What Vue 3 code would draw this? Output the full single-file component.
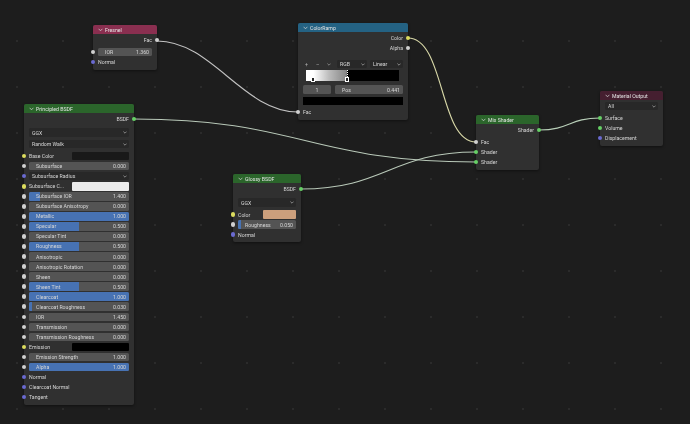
<template>
  <div class="canvas">
    <svg class="wires" width="690" height="424" viewBox="0 0 690 424" fill="none">
      <path v-for="w in wires" :key="w.d" :d="w.d" :stroke="w.color" stroke-width="1.1" />
    </svg>

    <div v-for="node in nodes" :key="node.title" class="node" :class="node.cls">
      <div class="head">
        <svg class="chev" width="5" height="4" viewBox="0 0 5 4" fill="none"><path d="M.6.8 2.5 2.8 4.4.8" stroke="#d8d8d8" stroke-width=".7" /></svg>
        <span>{{ node.title }}</span>
      </div>
      <div class="body">
        <div v-for="(r, i) in node.rows" :key="i" class="row" :class="['r-' + r.type, { linked: r.socket }]">
          <i v-if="r.socket" class="sock" :class="[r.side || 'left', r.socket]"></i>

          <span v-if="r.type === 'out' || r.type === 'in'" class="lbl">{{ r.label }}</span>

          <div v-else-if="r.type === 'select'" class="select">
            <span>{{ r.label }}</span>
            <svg width="4" height="3" viewBox="0 0 4 3" fill="none"><path d="M.4.6 2 2.2 3.6.6" stroke="#c8c8c8" stroke-width=".6" /></svg>
          </div>

          <div v-else-if="r.type === 'slider'" class="slider">
            <div class="fill" :style="{ width: r.fill * 100 + '%' }"></div>
            <span class="name">{{ r.label }}</span>
            <span class="val">{{ r.value }}</span>
          </div>

          <template v-else-if="r.type === 'color'">
            <span class="lbl">{{ r.label }}</span>
            <div class="swatch" :class="r.swatch" :style="{ background: r.color }"></div>
          </template>

          <template v-else-if="r.type === 'tools'">
            <div class="ramp-tools">
              <span>+</span><span>–</span>
              <svg width="4" height="3" viewBox="0 0 4 3" fill="none"><path d="M.4.6 2 2.2 3.6.6" stroke="#b4b4b4" stroke-width=".6" /></svg>
            </div>
            <div class="select rgb"><span>RGB</span><svg width="4" height="3" viewBox="0 0 4 3" fill="none"><path d="M.4.6 2 2.2 3.6.6" stroke="#c8c8c8" stroke-width=".6" /></svg></div>
            <div class="select linear"><span>Linear</span><svg width="4" height="3" viewBox="0 0 4 3" fill="none"><path d="M.4.6 2 2.2 3.6.6" stroke="#c8c8c8" stroke-width=".6" /></svg></div>
          </template>

          <div v-else-if="r.type === 'band'" class="band">
            <div class="handle first"></div>
            <div class="marker"></div>
            <div class="handle second"></div>
          </div>

          <template v-else-if="r.type === 'stop'">
            <div class="slider idx"><span class="name">1</span></div>
            <div class="slider pos"><span class="name">Pos</span><span class="val">0.441</span></div>
          </template>

          <div v-else-if="r.type === 'black'" class="blackbar"></div>
        </div>
      </div>
    </div>
  </div>
</template>

<script setup>
const slider = (label, value, fill = 0, socket = 'grey') => ({ type: 'slider', label, value, fill, socket })
const input = (label, socket) => ({ type: 'in', label, socket })
const output = (label, socket) => ({ type: 'out', label, socket, side: 'right' })

const nodes = [
  {
    title: 'Fresnel',
    cls: 'n-fresnel',
    rows: [
      output('Fac', 'grey'),
      slider('IOR', '1.360'),
      input('Normal', 'blue')
    ]
  },
  {
    title: 'ColorRamp',
    cls: 'n-ramp',
    rows: [
      output('Color', 'yellow'),
      output('Alpha', 'grey'),
      { type: 'tools' },
      { type: 'band' },
      { type: 'stop' },
      { type: 'black' },
      input('Fac', 'grey')
    ]
  },
  {
    title: 'Principled BSDF',
    cls: 'n-principled',
    rows: [
      output('BSDF', 'green'),
      { type: 'select', label: 'GGX' },
      { type: 'select', label: 'Random Walk' },
      { type: 'color', label: 'Base Color', color: '#191919', socket: 'yellow' },
      slider('Subsurface', '0.000'),
      { type: 'select', label: 'Subsurface Radius', socket: 'blue' },
      { type: 'color', label: 'Subsurface C...', color: '#ededed', socket: 'yellow' },
      slider('Subsurface IOR', '1.400', 0.11),
      slider('Subsurface Anisotropy', '0.000'),
      slider('Metallic', '1.000', 1),
      slider('Specular', '0.500', 0.5),
      slider('Specular Tint', '0.000'),
      slider('Roughness', '0.500', 0.5),
      slider('Anisotropic', '0.000'),
      slider('Anisotropic Rotation', '0.000'),
      slider('Sheen', '0.000'),
      slider('Sheen Tint', '0.500', 0.5),
      slider('Clearcoat', '1.000', 1),
      slider('Clearcoat Roughness', '0.030', 0.03),
      slider('IOR', '1.450'),
      slider('Transmission', '0.000'),
      slider('Transmission Roughness', '0.000'),
      { type: 'color', label: 'Emission', color: '#000', socket: 'yellow' },
      slider('Emission Strength', '1.000'),
      slider('Alpha', '1.000', 1),
      input('Normal', 'blue'),
      input('Clearcoat Normal', 'blue'),
      input('Tangent', 'blue')
    ]
  },
  {
    title: 'Glossy BSDF',
    cls: 'n-glossy',
    rows: [
      output('BSDF', 'green'),
      { type: 'select', label: 'GGX' },
      { type: 'color', label: 'Color', color: '#cc9f7c', socket: 'yellow', swatch: 'wide' },
      slider('Roughness', '0.050', 0.05),
      input('Normal', 'blue')
    ]
  },
  {
    title: 'Mix Shader',
    cls: 'n-mix',
    rows: [
      output('Shader', 'green'),
      input('Fac', 'grey'),
      input('Shader', 'green'),
      input('Shader', 'green')
    ]
  },
  {
    title: 'Material Output',
    cls: 'n-output',
    rows: [
      { type: 'select', label: 'All' },
      input('Surface', 'green'),
      input('Volume', 'green'),
      input('Displacement', 'blue')
    ]
  }
]

const wires = [
  { d: 'M157 41C212 41 243 112 298 112', color: '#c2c2c2' },
  { d: 'M134 119C300 119 310 162 476 162', color: '#b9c9b9' },
  { d: 'M301 189C385 189 392 152 476 152', color: '#b9c9b9' },
  { d: 'M408 38C445 38 439 142 476 142', color: '#d8d8a8' },
  { d: 'M539 130C570 130 569 118 600 118', color: '#b9d0b9' }
]
</script>

<style scoped>
.canvas {
  position: relative;
  width: 690px;
  height: 424px;
  overflow: hidden;
  background-color: #1d1d1d;
  background-image: radial-gradient(circle, #2b2b2b 0.7px, transparent 1px);
  background-size: 46px 46px;
  background-position: -6px 18px;
  font-family: "Roboto", "Liberation Sans", sans-serif;
  font-size: 5.2px;
  color: #d6d6d6;
  filter: blur(0.25px);
}

.wires {
  position: absolute;
  left: 0;
  top: 0;
}

.node {
  position: absolute;
  border-radius: 2px;
  background: #303030;
  box-shadow: 0 1px 3px rgba(0, 0, 0, 0.45);
}

.n-fresnel { left: 93px; top: 25px; width: 64px; --h: #8a2f50; }
.n-ramp { left: 298px; top: 23px; width: 110px; --h: #246283; }
.n-principled { left: 24px; top: 104px; width: 110px; --h: #2b652b; }
.n-glossy { left: 233px; top: 174px; width: 68px; --h: #2b652b; }
.n-mix { left: 476px; top: 115px; width: 63px; --h: #2b652b; }
.n-output { left: 600px; top: 91px; width: 63px; --h: #451f30; }

.head {
  display: flex;
  align-items: center;
  gap: 2px;
  height: 9px;
  padding-left: 5px;
  border-radius: 2px 2px 0 0;
  background: var(--h);
  color: #e4e4e4;
}

.chev {
  flex: none;
}

.body {
  display: flex;
  flex-direction: column;
  padding: 1px 0 2.5px;
}

.n-output .body {
  padding: 0 0 3px;
}

.row {
  position: relative;
  display: flex;
  align-items: center;
  gap: 3px;
  height: 10.05px;
  padding: 0 5px;
}

.r-out {
  justify-content: flex-end;
}

.r-out + .r-in,
.r-out + .r-slider {
  margin-top: 2px;
}

.r-out + .r-select {
  margin-top: 2.5px;
}

.r-select:not(.linked) {
  height: 12px;
  margin-bottom: 1px;
}

.r-select:not(.linked) + .r-select {
  margin-top: -1.5px;
}

.sock {
  position: absolute;
  top: 50%;
  width: 4.6px;
  height: 4.6px;
  margin-top: -2.3px;
  border-radius: 50%;
  box-sizing: border-box;
}

.sock.left { left: -2.3px; }
.sock.right { right: -2.3px; }
.sock.grey { background: #d0d0d0; }
.sock.yellow { background: #dcdc5e; }
.sock.blue { background: #6a6ad0; }
.sock.green { background: #66d066; }

.lbl {
  white-space: nowrap;
}

.select {
  display: flex;
  flex: 1;
  align-items: center;
  justify-content: space-between;
  height: 8.6px;
  padding: 0 2px 0 3px;
  border-radius: 1.5px;
  background: #282828;
}

.slider {
  position: relative;
  display: flex;
  flex: 1;
  align-items: center;
  justify-content: space-between;
  height: 8.6px;
  padding: 0 3px 0 7px;
  overflow: hidden;
  border-radius: 1.5px;
  background: #545454;
}

.fill {
  position: absolute;
  left: 0;
  top: 0;
  bottom: 0;
  background: #4772b3;
}

.name,
.val {
  position: relative;
  white-space: nowrap;
}

.swatch {
  flex: none;
  width: 57px;
  height: 8.6px;
  margin-left: auto;
  border-radius: 1px;
}

.swatch.wide {
  width: 33px;
}

.r-tools {
  margin-top: 6px;
}

.ramp-tools {
  display: flex;
  flex: 1;
  align-items: center;
  gap: 8px;
  padding-left: 2px;
  color: #b4b4b4;
}

.select.rgb {
  flex: 0 0 25px;
}

.select.linear {
  flex: 0 0 28px;
}

.r-band {
  height: 11px;
  margin-top: 1px;
  padding: 0 9px 0 8px;
}

.band {
  position: relative;
  flex: 1;
  height: 100%;
  background: linear-gradient(90deg, #fff 8%, #bbb 25%, #868686 43.5%, #000 44.2%);
}

.handle {
  position: absolute;
  bottom: -1px;
  width: 4.4px;
  height: 5px;
  background: #222;
  border: 0.7px solid #fff;
  box-sizing: border-box;
}

.handle.first { left: 5px; }
.handle.second { left: 38.8px; }

.marker {
  position: absolute;
  left: 40.6px;
  top: 0;
  bottom: 4px;
  border-left: 0.8px dotted #fff;
}

.r-stop {
  gap: 4px;
  height: 9px;
  margin-top: 4px;
}

.slider.idx {
  flex: 0 0 28px;
  justify-content: center;
  padding: 0;
}

.slider.pos {
  padding-left: 7px;
}

.r-black {
  height: 8px;
  margin-top: 3px;
}

.blackbar {
  flex: 1;
  height: 100%;
  background: #000;
}

.r-black + .r-in {
  margin-top: 2px;
}
</style>
